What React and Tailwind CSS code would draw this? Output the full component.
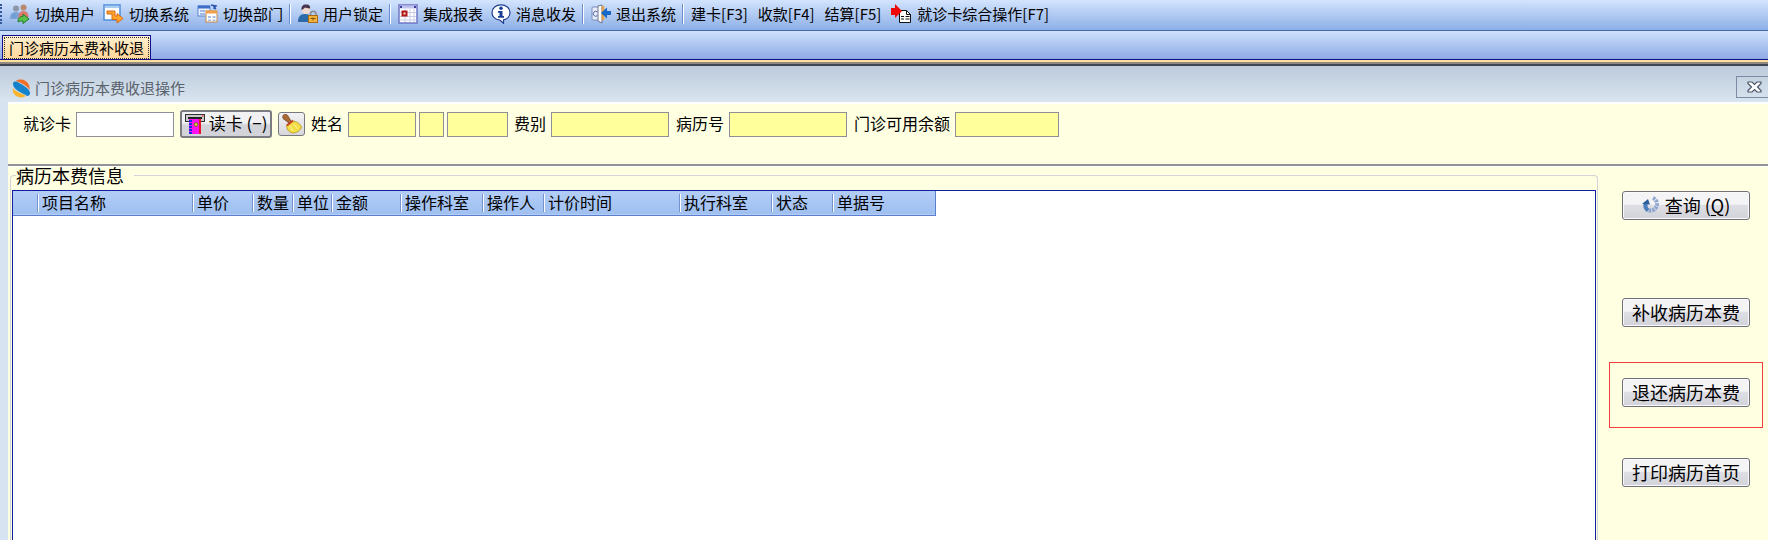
import React from 'react';

const SwitchUserIcon = () => (
    <svg width="20" height="20" viewBox="0 0 20 20">
        <circle cx="6" cy="4.5" r="3" fill="#8b97a8" />
        <path d="M0 15c0-5 2-7 6-7s5 2 5 7z" fill="#7fa3cf" />
        <circle cx="13.5" cy="3.6" r="3" fill="#b98a6d" />
        <path d="M8.500 14c0-5 2-7 5-7s5 2 5 6z" fill="#dd7a6e" />
        <circle cx="4" cy="12" r="2.500" fill="#6f9fd6" />
        <path d="M8 18c0-4 2-5.500 5-5.500V10l6 5-6 4.600V17c-2 0-3.500 0-5 1z" fill="#5cc04c" stroke="#1e7d2a" />
    </svg>
);

const SwitchSystemIcon = () => (
    <svg width="21" height="20" viewBox="0 0 21 20">
        <rect x="1" y="1" width="16" height="15" fill="#fff" stroke="#4e8fd8" strokeWidth="1.5" />
        <path d="M2 3h14" stroke="#a9cdf2" strokeWidth="2" />
        <path d="M4 7h8v5h2V9.500l6 5-6 4.500v-3.500H9V10H4z" fill="#ffa52e" stroke="#d96a10" />
    </svg>
);

const SwitchDeptIcon = () => (
    <svg width="21" height="20" viewBox="0 0 21 20">
        <rect x="1" y="2" width="12" height="10" fill="#eaf2ff" stroke="#5b83d0" />
        <path d="M1 3h12" stroke="#3e6fc9" strokeWidth="3" />
        <path d="M3 7h5M3 10h5" stroke="#5b83d0" />
        <path d="M14 1l5 1-2 2 2 1M16 2l3 3" fill="none" stroke="#2f56b0" strokeWidth="1.5" />
        <rect x="9" y="7" width="11" height="11" fill="#fff" stroke="#c8894a" />
        <path d="M9 8h11" stroke="#f0a04a" strokeWidth="3" />
        <path d="M11 12h3v2h-3zM15.500 12h3v2h-3zM11 15.500h3v1.500h-3zM15.500 15.500h3v1.500h-3z" fill="#a3bde6" />
    </svg>
);

const LockUserIcon = () => (
    <svg width="20" height="20" viewBox="0 0 20 20">
        <path d="M0 18c0-5 2-8 7-8s7 3 7 8z" fill="#2c6aa8" />
        <circle cx="8" cy="6" r="4" fill="#f1d9d0" />
        <path d="M3.500 6c-.5-4 2-6 5-5.500 3 0 4 2 3.500 4-3 0-4-1-5-1-1 1-2 2-3.500 2.500z" fill="#4a3550" />
        <path d="M12.500 12V9.500a2.800 2.800 0 0 1 5.500 0V12" fill="none" stroke="#8b8b8b" strokeWidth="1.5" />
        <rect x="10.500" y="11.500" width="9" height="7" fill="#f3b23e" stroke="#a96c12" />
        <path d="M15 13.500v3M12.500 14.500h5" stroke="#8a5608" />
    </svg>
);

const ReportIcon = () => (
    <svg width="20" height="20" viewBox="0 0 20 20">
        <rect x="1" y="1" width="18" height="18" fill="#fff" stroke="#6f74c4" strokeWidth="1.5" />
        <path d="M2 3h16" stroke="#c0c3ee" strokeWidth="3" />
        <path d="M2 3h2M16 3h2" stroke="#38409a" strokeWidth="2" />
        <path d="M7 5v13M12 5v13M16 5v13M2 8.500h16M2 12.500h16M2 16h16" stroke="#c9cbe8" />
        <rect x="4.500" y="7.500" width="4" height="4" fill="#ffd9d0" stroke="#b01818" strokeWidth="2" />
    </svg>
);

const MessageIcon = () => (
    <svg width="20" height="20" viewBox="0 0 20 20">
        <path d="M10 .8c5 0 9 3.200 9 7.700 0 3.900-2.800 6.800-6.500 7.400V19.200L8.800 16C4.300 15.500 1 12.600 1 8.500 1 4 5 .8 10 .8z" fill="#fff" stroke="#1c3c8f" strokeWidth="1.200" />
        <circle cx="10" cy="4.300" r="1.800" fill="#173f96" />
        <path d="M7 7h4.500v5H13v1.800H7V12h1.500V8.800H7z" fill="#173f96" />
    </svg>
);

const ExitIcon = () => (
    <svg width="20" height="20" viewBox="0 0 20 20">
        <rect x="1" y="3" width="9" height="13" rx="1" fill="#e7edfb" stroke="#7d8dba" />
        <path d="M6.500 8a2.500 2.500 0 1 0 0 3.500" fill="none" stroke="#4d62a3" />
        <path d="M7 2l4-1v18l-4-2z" fill="#fff" stroke="#6e7389" />
        <path d="M12 2v14" stroke="#e0a043" strokeWidth="2.500" />
        <path d="M10 9l6-5.500v3.500h4v4h-4v3.500z" fill="#1668c9" />
    </svg>
);

const CardOpsIcon = () => (
    <svg width="21" height="20" viewBox="0 0 21 20">
        <path d="M8.500 6.500h7l4 4v8h-11z" fill="#fff" stroke="#111" />
        <path d="M15.500 6.500v4h4" fill="none" stroke="#111" />
        <path d="M10 12.500h3M14.500 12.500h4M10 15h3M14.500 15h4" stroke="#111" />
        <path d="M0 4h4V0l7 7-7 7v-3H0z" fill="#f00808" />
    </svg>
);

const LogoIcon = () => (
    <svg width="19" height="19" viewBox="0 0 19 19">
        <path d="M4 2c4-3 11-1 13 4l1 5C15 7 10 4 4 2z" fill="#f0702a" />
        <path d="M1 5c0-3 3-3 6-1 4 2 11 6 11 10 0 2-1 3-3 3C11 14 1 11 1 5z" fill="#1583cc" />
        <path d="M1 9c2 4 9 5 13 8-3 2-8 2-11-1-2-2-2.500-4-2-7z" fill="#f7b52c" />
    </svg>
);

const CardReaderIcon = () => (
    <svg width="20" height="20" viewBox="0 0 20 20">
        <rect x=".5" y=".5" width="19" height="7" fill="#c9c9c9" stroke="#333" />
        <path d="M3 4h14" stroke="#222" strokeWidth="2" />
        <path d="M17 2h1.500" stroke="#f00" />
        <path d="M4 5h12v15H4z" fill="#fb10ee" />
        <path d="M14 5h2v15h-2z" fill="#e8182c" />
        <path d="M5.500 6v14" stroke="#1d28e0" strokeWidth="3" strokeDasharray="2 1" />
        <circle cx="11" cy="10.500" r="1.800" fill="#e5c94a" stroke="#7c6b1c" />
    </svg>
);

const BroomIcon = () => (
    <svg width="20" height="20" viewBox="0 0 20 20">
        <path d="M1 1.500C3-.5 5 0 6 2l3.500 6-2 1.500L3 6C.5 5 .5 3 1 1.500z" fill="#a96a35" stroke="#6d3d18" strokeWidth=".7" />
        <path d="M10.500 7c4 .5 7 2 9 6-1 3.500-5 6-9 6-4-1-6-4-6-8z" fill="#f4de48" stroke="#b0941c" strokeWidth=".8" />
        <path d="M5 11.500L11 6.500" stroke="#c7402a" strokeWidth="2" />
        <path d="M8 12l3 5M11.500 10l4.500 5" stroke="#fff3a0" />
    </svg>
);

const RefreshIcon = () => (
    <svg width="19" height="19" viewBox="0 0 19 19" fill="none">
        <path d="M11 3a6.500 6.500 0 1 1-5 12" stroke="#8fa6d0" strokeWidth="4" strokeDasharray="2.500 .8" />
        <path d="M6 15.500A6.500 6.500 0 0 1 4 8" stroke="#4a7dba" strokeWidth="4" />
        <path d="M0 9l6-5 2 5.500z" fill="#2c5f9e" />
    </svg>
);

const CloseIcon = () => (
    <svg width="15" height="12" viewBox="0 0 15 12">
        <path d="M1 1h4l2.500 2.500L10 1h4v1.500L10.500 6 14 9.500V11h-4L7.500 8.500 5 11H1V9.500L4.500 6 1 2.500z" fill="#fff" stroke="#4c5669" strokeWidth="1.200" />
    </svg>
);

const ToolButton = ({ icon, children }) => (
    <button className="flex h-6 items-center gap-[5px] whitespace-nowrap">
        {icon}
        {children}
    </button>
);

const Divider = () => <span className="-ml-0.5 -mr-px h-5 w-0.5 border-l border-r border-l-[#6a8ccb] border-r-white" />;

const Field = ({ id, label, className, readOnly = true }) => (
    <div className="flex items-center gap-[5px]">
        <label htmlFor={id} className="whitespace-nowrap pb-0.5">{label}</label>
        <input
            id={id}
            readOnly={readOnly}
            className={`h-[25px] border border-[#8f8f99] px-1 outline-none ${readOnly ? 'bg-[#ffff9c]' : 'bg-white'} ${className}`}
        />
    </div>
);

const ActionButton = ({ children }) => (
    <button className="flex h-[29px] w-32 items-center justify-center gap-1 whitespace-nowrap rounded-[3px] border border-[#70707a] bg-linear-to-b from-[#f4f4f6] from-45% via-[#dedee4] via-50% to-[#d2d2da] pb-0.5 text-lg leading-5 shadow-[inset_0_0_0_1px_#fafafa]">
        {children}
    </button>
);

const columns = [
    { name: '', width: 24 },
    { name: '项目名称', width: 155 },
    { name: '单价', width: 60 },
    { name: '数量', width: 40 },
    { name: '单位', width: 39 },
    { name: '金额', width: 69 },
    { name: '操作科室', width: 82 },
    { name: '操作人', width: 61 },
    { name: '计价时间', width: 136 },
    { name: '执行科室', width: 92 },
    { name: '状态', width: 61 },
    { name: '单据号', width: 103 },
];

const App = () => {
    return (
        <div className="flex min-h-screen flex-col overflow-hidden bg-[#d7e3f0] font-['Noto_Sans_CJK_SC',sans-serif] text-base leading-5 text-black">
            <header className="flex h-[31px] items-center gap-2 border-b border-[#4468a8] bg-linear-to-b from-[#d3e4fd] to-[#8dafe6] pb-0.5 pr-2 text-[15px]">
                <span className="h-5 w-0.5 border-r-2 border-dotted border-[#35569c]" />
                <ToolButton icon={<SwitchUserIcon />}>切换用户</ToolButton>
                <ToolButton icon={<SwitchSystemIcon />}>切换系统</ToolButton>
                <ToolButton icon={<SwitchDeptIcon />}>切换部门</ToolButton>
                <Divider />
                <ToolButton icon={<LockUserIcon />}>用户锁定</ToolButton>
                <Divider />
                <ToolButton icon={<ReportIcon />}>集成报表</ToolButton>
                <ToolButton icon={<MessageIcon />}>消息收发</ToolButton>
                <Divider />
                <ToolButton icon={<ExitIcon />}>退出系统</ToolButton>
                <Divider />
                <div className="flex gap-2.5">
                    <ToolButton>建卡[F3]</ToolButton>
                    <ToolButton>收款[F4]</ToolButton>
                    <ToolButton>结算[F5]</ToolButton>
                    <ToolButton icon={<CardOpsIcon />}>就诊卡综合操作[F7]</ToolButton>
                </div>
            </header>

            <nav className="flex h-[29px] items-end border-b border-[#10108c] bg-linear-to-b from-[#cfe1fc] to-[#8faae6] pl-0.5 text-[15px]">
                <button className="h-6 border border-b-0 border-[#10108c] bg-linear-to-b from-[#fff0cf] to-[#ffd697] p-px">
                    <span className="block whitespace-nowrap border border-dotted border-[#333] px-1 leading-5">门诊病历本费补收退</span>
                </button>
            </nav>
            <div className="h-1.5 border-b-2 border-[#3e4653] bg-linear-to-b from-[#ffdf9b] from-50% to-[#8f8780] to-50%" />

            <main className="flex flex-1 flex-col">
                <div className="flex h-9 items-end justify-between bg-linear-to-b from-[#bccada] to-[#d9e5f0] pl-3 text-[15px] text-[#59616b]">
                    <h1 className="flex items-center gap-1 pb-1">
                        <LogoIcon />
                        门诊病历本费收退操作
                    </h1>
                    <button aria-label="关闭" className="mb-1 flex h-[22px] w-8 items-center justify-center border border-r-0 border-[#7c8ba3] pl-1">
                        <CloseIcon />
                    </button>
                </div>

                <div className="ml-2 flex flex-1 flex-col border-t-2 border-white bg-[#ffffe1]">
                    <form className="flex h-[62px] items-start gap-1.5 border-b-2 border-[#939393] pl-[15px] pt-1.5">
                        <div className="flex h-7 items-center gap-1.5">
                            <Field id="card" label="就诊卡" className="w-[98px]" readOnly={false} />
                            <button type="button" className="flex h-7 w-[92px] items-center justify-center gap-1 whitespace-nowrap rounded-[3px] border-2 border-[#7b7b82] bg-linear-to-b from-[#f1f1f3] from-45% to-[#d3d3da] to-55% text-[17px]">
                                <CardReaderIcon />
                                <span className="pb-0.5">读卡 (−)</span>
                            </button>
                            <button type="button" aria-label="清空" className="flex h-6 w-[27px] items-center justify-center rounded-[3px] border border-[#77777f] bg-linear-to-b from-[#f3f3f5] to-[#d6d6dc]">
                                <BroomIcon />
                            </button>
                        </div>
                        <div className="flex h-7 items-center gap-[3px]">
                            <Field id="name" label="姓名" className="w-[68px]" />
                            <input aria-label="性别" readOnly className="h-[25px] w-[25px] border border-[#8f8f99] bg-[#ffff9c] outline-none" />
                            <input aria-label="年龄" readOnly className="h-[25px] w-[61px] border border-[#8f8f99] bg-[#ffff9c] outline-none" />
                        </div>
                        <div className="flex h-7 items-center gap-[7px]">
                            <Field id="fee-type" label="费别" className="w-[118px]" />
                            <Field id="record-no" label="病历号" className="w-[118px]" />
                            <Field id="balance" label="门诊可用余额" className="w-[104px]" />
                        </div>
                    </form>

                    <div className="flex flex-1 border-t border-white">
                        <fieldset className="ml-0.5 flex min-w-0 flex-1 flex-col rounded-t border border-b-0 border-[#d3d3dc] px-px">
                            <legend className="ml-1 pr-2.5 text-lg leading-4">病历本费信息</legend>
                            <div className="mt-[7px] flex-1 border border-b-0 border-[#1020a0] bg-white">
                                <table className="table-fixed border-collapse">
                                    <colgroup>
                                        {columns.map((c, i) => (
                                            <col key={i} style={{ width: c.width }} />
                                        ))}
                                    </colgroup>
                                    <thead>
                                        <tr className="h-6 border-b border-r border-[#5b7fd0] bg-linear-to-b from-[#b3cdf7] to-[#9fc0f0]">
                                            {columns.map((c, i) => (
                                                <th key={i} scope="col" className="p-0 text-left font-normal">
                                                    <div className={`h-[18px] whitespace-nowrap pl-1 leading-4 ${i > 0 ? 'border-l border-[#7592cc] shadow-[inset_1px_0_0_#fff]' : ''}`}>
                                                        {c.name}
                                                    </div>
                                                </th>
                                            ))}
                                        </tr>
                                    </thead>
                                    <tbody />
                                </table>
                            </div>
                        </fieldset>

                        <aside className="flex w-[170px] flex-col items-start pl-[11px] pt-6">
                            <div className="ml-[13px]">
                                <ActionButton>
                                    <RefreshIcon />
                                    <span>查询 (<u className="underline-offset-2">Q</u>)</span>
                                </ActionButton>
                            </div>
                            <div className="ml-[13px] mt-[78px]">
                                <ActionButton>补收病历本费</ActionButton>
                            </div>
                            <div className="mt-[35px] border border-[#f63c3c] px-3 pb-5 pt-[15px]">
                                <ActionButton>退还病历本费</ActionButton>
                            </div>
                            <div className="ml-[13px] mt-[30px]">
                                <ActionButton>打印病历首页</ActionButton>
                            </div>
                        </aside>
                    </div>
                </div>
            </main>
        </div>
    );
};

export default App;
